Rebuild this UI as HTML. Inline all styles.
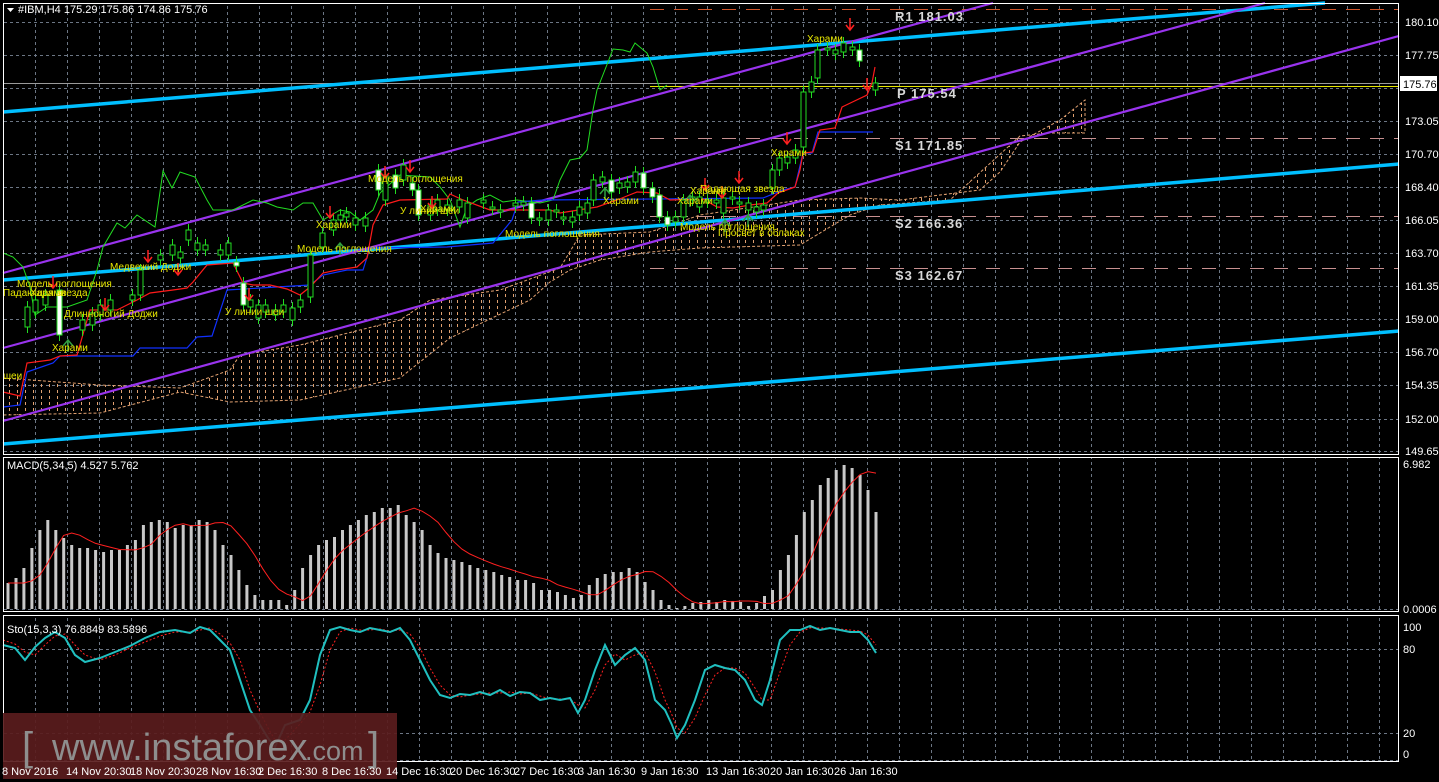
<!DOCTYPE html>
<html><head><meta charset="utf-8"><style>
html,body{margin:0;padding:0;background:#000;width:1439px;height:782px;overflow:hidden}
svg{display:block}
text{font-family:"Liberation Sans","DejaVu Sans",sans-serif}
.ax{fill:#fff;font-size:11px}
.lb{fill:#e6e600;font-size:10px}
.pv{fill:#d8d8d8;font-size:13px;font-weight:bold;font-family:"Liberation Mono",monospace;letter-spacing:1px}
</style></head><body>
<svg id="s" width="1439" height="782" xmlns="http://www.w3.org/2000/svg">
<defs>
<pattern id="vg" patternUnits="userSpaceOnUse" x="35" y="0" width="32" height="782">
<line x1="0.5" y1="0" x2="0.5" y2="782" stroke="#6c7684" stroke-dasharray="3,3"/>
</pattern>
<pattern id="cl" patternUnits="userSpaceOnUse" x="0" y="0" width="8" height="782">
<line x1="1.5" y1="0" x2="1.5" y2="782" stroke="#e0a070" stroke-dasharray="3,3"/>
</pattern>
</defs>
<rect width="1439" height="782" fill="#000"/>
<rect x="4" y="4" width="1394" height="450" fill="url(#vg)"/>
<rect x="4" y="458" width="1394" height="153" fill="url(#vg)"/>
<rect x="4" y="617" width="1394" height="144" fill="url(#vg)"/>
<g stroke="#6c7684" stroke-dasharray="3,3">
<line x1="4" y1="22.5" x2="1398" y2="22.5"/><line x1="4" y1="55.5" x2="1398" y2="55.5"/>
<line x1="4" y1="88.5" x2="1398" y2="88.5"/><line x1="4" y1="121.5" x2="1398" y2="121.5"/>
<line x1="4" y1="154.5" x2="1398" y2="154.5"/><line x1="4" y1="187.5" x2="1398" y2="187.5"/>
<line x1="4" y1="220.5" x2="1398" y2="220.5"/><line x1="4" y1="253.5" x2="1398" y2="253.5"/>
<line x1="4" y1="286.5" x2="1398" y2="286.5"/><line x1="4" y1="319.5" x2="1398" y2="319.5"/>
<line x1="4" y1="352.5" x2="1398" y2="352.5"/><line x1="4" y1="385.5" x2="1398" y2="385.5"/>
<line x1="4" y1="419.5" x2="1398" y2="419.5"/><line x1="4" y1="451.5" x2="1398" y2="451.5"/>
<line x1="4" y1="609.5" x2="1398" y2="609.5"/>
<line x1="4" y1="649.5" x2="1398" y2="649.5"/><line x1="4" y1="733.5" x2="1398" y2="733.5"/>
<line x1="4" y1="760.5" x2="1398" y2="760.5"/>
</g>
<polygon fill="url(#cl)" points="3,378 100,385 180,388 230,370 240,355 300,345 400,320 430,300 500,290 560,268 580,235 650,232 700,215 800,200 860,198 900,200 980,190 1000,172 1020,142 1060,120 1085,100 1085,133 1050,133 1020,136 950,200 880,205 850,215 800,245 700,248 650,252 600,260 570,270 550,282 530,300 450,338 400,378 300,400 230,402 180,392 100,413 3,415"/>
<polyline fill="none" stroke="#e0a070" stroke-dasharray="3,2" points="3,378 100,385 180,388 230,370 240,355 300,345 400,320 430,300 500,290 560,268 580,235 650,232 700,215 800,200 860,198 900,200 980,190 1000,172 1020,142 1060,120 1085,100 1085,133 1050,133 1020,136 950,200 880,205 850,215 800,245 700,248 650,252 600,260 570,270 550,282 530,300 450,338 400,378 300,400 230,402 180,392 100,413 3,415"/>
<line x1="650" y1="9.5" x2="1398" y2="9.5" stroke="#d0552a" stroke-dasharray="14,10"/>
<line x1="650" y1="138.5" x2="1398" y2="138.5" stroke="#c89090" stroke-dasharray="14,10"/>
<line x1="650" y1="216.5" x2="1398" y2="216.5" stroke="#c89090" stroke-dasharray="14,10"/>
<line x1="650" y1="268.5" x2="1398" y2="268.5" stroke="#c89090" stroke-dasharray="14,10"/>
<line x1="4" y1="83.5" x2="1398" y2="83.5" stroke="#9a9a9a"/>
<line x1="650" y1="86.5" x2="1398" y2="86.5" stroke="#e6e600"/>
<g stroke="#00bfff" stroke-width="3.5">
<line x1="3" y1="112" x2="1325" y2="3"/>
<line x1="3" y1="280" x2="1399" y2="164"/>
<line x1="3" y1="444" x2="1399" y2="331"/>
</g>
<g stroke="#9933ee" stroke-width="2.2">
<line x1="3" y1="273" x2="993" y2="3"/>
<line x1="3" y1="348" x2="1265" y2="3"/>
<line x1="3" y1="421" x2="1399" y2="36"/>
</g>
<polyline fill="none" stroke="#22dd22" stroke-width="1" points="3,253 13,257 23,267 30,287 35,315 47,307 67,307 87,300 97,270 103,247 117,223 125,228 137,215 155,227 163,171 172,188 180,172 195,177 207,200 213,210 233,210 253,200 267,203 277,207 293,210 303,203 313,203 323,220 340,210 350,212 360,220 373,210 380,193 400,175 430,177 440,187 450,200 460,227 467,207 477,200 490,195 503,202 517,200 540,203 553,200 560,180 570,160 580,158 587,150 593,110 597,90 608,62 613,49 623,50 630,52 635,43 647,53 653,67 660,90 667,85"/>
<polyline fill="none" stroke="#1030ff" stroke-width="1.2" points="3,407 20,405 27,372 53,363 60,356 133,356 140,348 187,348 197,337 212,336 227,290 310,285 323,275 347,270 363,270 370,248 447,247 493,243 512,220 518,202 543,200 763,198 783,190 795,187 803,153 812,153 818,132 873,132"/>
<polyline fill="none" stroke="#ff1a1a" stroke-width="1.2" points="3,392 20,396 27,363 50,360 60,356 77,355 90,310 117,310 137,300 150,293 173,290 187,288 193,282 207,265 233,263 243,283 253,285 270,285 287,289 300,295 310,287 323,273 337,270 357,267 367,258 373,225 383,205 400,200 447,199 450,194 463,200 490,210 550,210 560,213 597,207 617,200 637,192 657,193 670,200 703,199 717,207 733,208 750,205 767,203 778,193 795,187 800,170 803,153 813,152 820,130 835,128 842,107 867,95 872,83 875,67"/>
<g id="candles"></g>
<g id="arr"></g>
<g class="lb">
<text x="807" y="42">Харами</text>
<text x="771" y="156">Харами</text>
<text x="700" y="192">Падающая звезда</text>
<text x="690" y="194">Харами</text>
<text x="677" y="204">Харами</text>
<text x="680" y="230">Модель поглощения</text>
<text x="718" y="236">Просвет в облаках</text>
<text x="603" y="204">Харами</text>
<text x="505" y="237">Модель поглощения</text>
<text x="368" y="182">Модель поглощения</text>
<text x="400" y="214">У линии шеи</text>
<text x="420" y="212">Харами</text>
<text x="316" y="228">Харами</text>
<text x="297" y="252">Модель поглощения</text>
<text x="110" y="270">Медвежий Доджи</text>
<text x="17" y="287">Модель поглощения</text>
<text x="3" y="296">Падающая звезда</text>
<text x="30" y="296">Харами</text>
<text x="64" y="317">Длинноногий Доджи</text>
<text x="225" y="315">У линии шеи</text>
<text x="52" y="351">Харами</text>
<text x="3" y="379">шеи</text>
</g>
<g class="pv">
<text x="895" y="21">R1 181.03</text>
<text x="897" y="98">P 175.54</text>
<text x="895" y="150">S1 171.85</text>
<text x="895" y="228">S2 166.36</text>
<text x="895" y="280">S3 162.67</text>
</g>
<g id="macd"></g>
<polyline fill="none" stroke="#ff2020" stroke-width="1" stroke-dasharray="2,2" points="3,640 15,644 25,652 35,655 45,645 55,636 65,634 75,645 85,655 100,660 115,655 130,648 145,642 160,636 175,632 190,632 200,630 210,628 220,634 230,643 240,660 250,690 260,712 268,728 275,740 285,740 300,724 310,712 320,685 330,650 340,632 350,628 360,630 370,630 380,629 390,631 400,630 410,634 420,648 430,668 440,685 450,695 460,697 470,695 480,694 490,693 500,693 510,692 520,694 530,693 540,696 550,699 560,699 570,699 578,705 585,708 595,690 605,665 615,654 625,660 635,655 645,652 655,672 665,700 672,715 677,728 685,733 695,718 705,695 715,675 725,668 735,668 745,673 755,688 762,700 770,700 780,672 790,645 800,632 810,628 820,628 830,628 840,629 850,630 860,631 868,635 876,645"/>
<polyline fill="none" stroke="#20c0c0" stroke-width="2" points="3,645 15,648 25,660 35,647 45,638 55,632 65,638 75,655 85,662 100,658 115,652 130,646 145,638 160,632 175,630 190,633 200,627 210,630 220,640 230,650 240,680 250,710 260,725 268,738 275,747 285,725 300,720 310,700 320,655 330,630 340,627 350,630 360,632 370,628 380,630 390,632 400,628 410,640 420,660 430,680 440,695 450,698 460,694 470,695 480,692 490,695 500,690 510,696 520,692 530,693 540,700 550,698 560,700 570,698 578,713 585,700 595,670 605,645 615,665 625,655 635,648 645,660 655,700 665,710 672,725 677,738 685,725 695,700 705,670 715,665 725,668 735,670 745,680 755,700 762,705 770,680 780,640 790,630 800,630 810,626 820,630 830,628 840,630 850,632 860,632 868,640 876,653"/>
<g fill="none" stroke="#fff" stroke-width="1">
<rect x="3.5" y="3.5" width="1395" height="451"/>
<rect x="3.5" y="457.5" width="1395" height="154"/>
<rect x="3.5" y="615.5" width="1395" height="146"/>
</g>
<rect x="3" y="713" width="394" height="66" fill="#5a1c1d" opacity="0.92"/>
<g fill="#8e8e8e">
<text x="22" y="760" font-size="40" font-weight="300">[</text>
<text x="52" y="760" font-size="38">www.instaforex</text>
<text x="305" y="760" font-size="27">.com</text>
<text x="368" y="760" font-size="40">]</text>
</g>
<polygon points="7,8 14,8 10.5,12" fill="#fff"/>
<text x="18" y="13" class="ax" font-size="10">#IBM,H4  175.29 175.86 174.86 175.76</text>
<text x="7" y="469" class="ax" font-size="10">MACD(5,34,5) 4.527 5.762</text>
<text x="7" y="633" class="ax" font-size="10">Sto(15,3,3) 76.8849 83.5896</text>
<g class="ax">
<text x="1405" y="26">180.10</text><text x="1405" y="59">177.75</text>
<text x="1405" y="125">173.05</text><text x="1405" y="158">170.70</text>
<text x="1405" y="191">168.40</text><text x="1405" y="224">166.05</text>
<text x="1405" y="257">163.70</text><text x="1405" y="290">161.35</text>
<text x="1405" y="323">159.00</text><text x="1405" y="356">156.70</text>
<text x="1405" y="389">154.35</text><text x="1405" y="423">152.00</text>
<text x="1405" y="455">149.65</text>
<text x="1403" y="468">6.982</text>
<text x="1403" y="613">0.0006</text>
<text x="1403" y="631">100</text><text x="1403" y="653">80</text>
<text x="1403" y="737">20</text><text x="1403" y="758">0</text>
</g>
<rect x="1400" y="76" width="37" height="15" fill="#fff"/>
<text x="1403" y="88" font-size="11" fill="#000">175.76</text>
<g class="ax" font-size="9">
<text x="2" y="775">8 Nov 2016</text><text x="66" y="775">14 Nov 20:30</text>
<text x="130" y="775">18 Nov 20:30</text><text x="196" y="775">28 Nov 16:30</text>
<text x="258" y="775">2 Dec 16:30</text><text x="322" y="775">8 Dec 16:30</text>
<text x="386" y="775">14 Dec 16:30</text><text x="450" y="775">20 Dec 16:30</text>
<text x="514" y="775">27 Dec 16:30</text><text x="578" y="775">3 Jan 16:30</text>
<text x="641" y="775">9 Jan 16:30</text><text x="706" y="775">13 Jan 16:30</text>
<text x="770" y="775">20 Jan 16:30</text><text x="834" y="775">26 Jan 16:30</text>
</g>
</svg>
<script>
(function(){
var NS="http://www.w3.org/2000/svg";
function el(p,t,a){var e=document.createElementNS(NS,t);for(var k in a)e.setAttribute(k,a[k]);p.appendChild(e);return e;}
var c=document.getElementById("candles");
var C=[[27,307,327],[35,300,312],[45,295,305],[59,290,335,1],[82,320,330],[92,313,325],[100,305,315],[110,300,310],[132,295,300],[140,270,295],[160,255,260],[172,245,255],[180,252,258],[188,230,240],[197,243,250],[205,245,250],[220,250,255],[228,243,255],[236,262,266,1],[243,283,305,1],[250,300,307],[258,305,318],[265,305,312],[275,310,315],[283,305,312],[292,308,320],[300,300,307],[310,255,297],[322,233,247],[333,220,230],[340,215,220],[346,213,217],[355,218,225],[365,218,226],[378,170,190,1],[385,175,200],[395,175,188,1],[403,165,180],[412,183,190,1],[418,190,215,1],[430,205,215],[437,200,210],[447,205,210],[459,200,207],[467,203,218],[483,200,203],[492,207,209],[500,210,212],[515,203,206],[523,202,205],[531,203,218,1],[539,218,220],[548,210,220],[556,210,212],[563,217,219],[572,217,222],[579,207,215],[587,203,213],[593,180,200],[602,177,182],[611,180,192,1],[619,183,188],[627,182,187],[635,172,182],[643,173,188,1],[652,188,197,1],[659,195,217,1],[667,217,225,1],[675,217,222],[683,200,217],[692,197,200],[699,197,207],[707,200,202],[716,200,203],[723,198,213],[732,197,199],[739,202,204],[748,203,210],[756,207,212],[763,205,210],[772,170,188],[779,158,170],[787,157,163],[795,150,158],[803,92,147],[811,82,92],[817,50,78],[827,48,50],[835,50,54],[843,43,52],[852,47,50],[859,50,61,1],[875,83,90]];
C.forEach(function(a){
 el(c,"line",{x1:a[0]+.5,y1:a[1]-6,x2:a[0]+.5,y2:a[2]+6,stroke:"#22dd22"});
 el(c,"rect",{x:a[0]-2,y:a[1],width:5,height:Math.max(2,a[2]-a[1]),fill:a[3]?"#fff":"#000",stroke:"#22dd22","stroke-width":1});
});
var ar=document.getElementById("arr");
[[53,288],[105,310],[148,262],[178,275],[249,300],[330,218],[385,178],[410,172],[432,208],[722,198],[739,183],[705,190],[787,144],[850,30],[867,90]].forEach(function(p){
 el(ar,"path",{d:"M"+p[0]+" "+(p[1]-12)+"V"+p[1]+"M"+(p[0]-4)+" "+(p[1]-5)+"L"+p[0]+" "+p[1]+"L"+(p[0]+4)+" "+(p[1]-5),stroke:"#ff2020","stroke-width":1.5,fill:"none"});
});
[[68,340],[340,243],[605,188],[690,195],[725,220],[748,215]].forEach(function(p){
 el(ar,"path",{d:"M"+p[0]+" "+(p[1]+12)+"V"+p[1]+"M"+(p[0]-5)+" "+(p[1]+6)+"L"+p[0]+" "+p[1]+"L"+(p[0]+5)+" "+(p[1]+6),stroke:"#30a040","stroke-width":1.5,fill:"none"});
});
var m=document.getElementById("macd");
var H=[583,578,568,548,530,520,530,538,545,548,548,550,552,550,550,545,540,525,522,520,522,528,525,525,520,522,530,545,555,570,585,595,600,600,600,605,590,568,555,545,540,537,530,525,520,515,512,508,508,505,515,522,530,545,553,558,560,562,565,568,570,572,575,577,580,580,583,590,590,592,595,598,595,585,578,574,572,572,568,572,582,590,600,605,608,606,603,602,600,602,600,601,602,606,603,596,590,570,555,535,512,500,485,478,470,465,468,475,490,512];
var n=H.length,x0=8,dx=(876-8)/(n-1),pts=[],e=H[0];
for(var i=0;i<n;i++){var x=x0+i*dx;el(m,"rect",{x:(x-1.5).toFixed(1),y:H[i],width:3,height:609-H[i],fill:"#c8c8c8"});
 var lag=H[Math.max(0,i-2)];e=e+(lag-e)*0.45;pts.push(x.toFixed(1)+","+e.toFixed(1));}
el(m,"polyline",{points:pts.join(" "),fill:"none",stroke:"#ff2020","stroke-width":1});
})();
</script>
</body></html>
